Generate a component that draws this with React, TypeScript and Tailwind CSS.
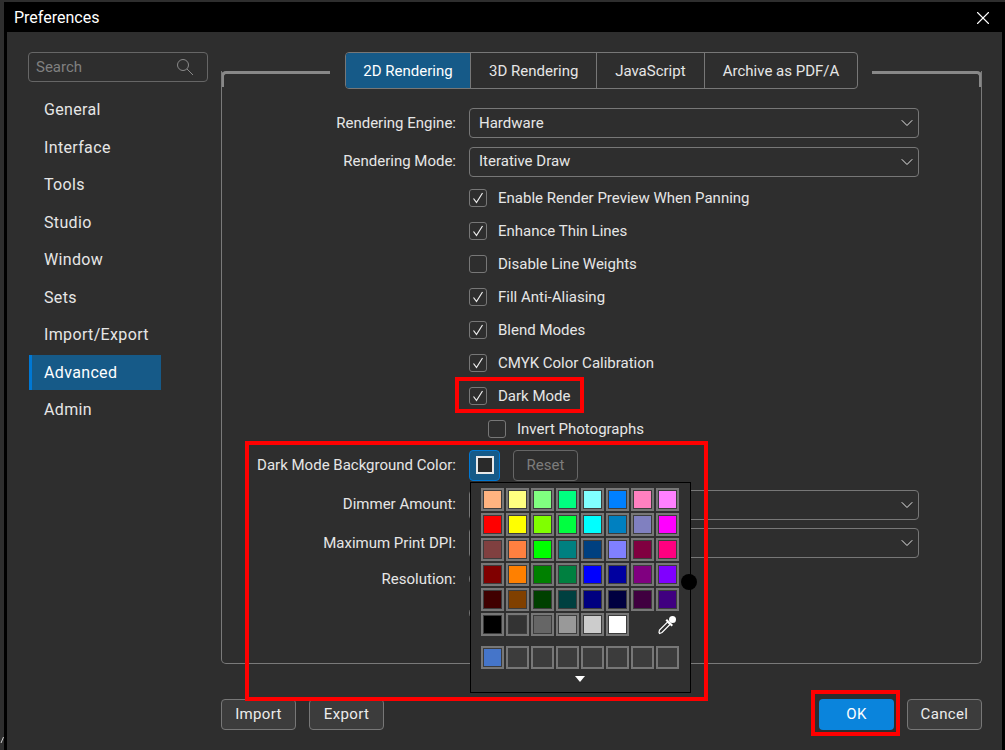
import { ChevronDown, X } from 'lucide-react';

const navItems = ['General', 'Interface', 'Tools', 'Studio', 'Window', 'Sets', 'Import/Export', 'Advanced', 'Admin'];

const tabs = [
  { label: '2D Rendering', width: 'w-[126px]', active: true },
  { label: '3D Rendering', width: 'w-[126px]', active: false },
  { label: 'JavaScript', width: 'w-[108px]', active: false },
  { label: 'Archive as PDF/A', width: 'w-[153px]', active: false },
];

const checks = [
  { label: 'Enable Render Preview When Panning', on: true },
  { label: 'Enhance Thin Lines', on: true },
  { label: 'Disable Line Weights', on: false },
  { label: 'Fill Anti-Aliasing', on: true },
  { label: 'Blend Modes', on: true },
  { label: 'CMYK Color Calibration', on: true },
  { label: 'Dark Mode', on: true },
];

const swatches = [
  'bg-[#ffb380]', 'bg-[#ffff80]', 'bg-[#80ff80]', 'bg-[#00ff80]', 'bg-[#80ffff]', 'bg-[#0080ff]', 'bg-[#ff80c0]', 'bg-[#ff80ff]',
  'bg-[#ff0000]', 'bg-[#ffff00]', 'bg-[#80ff00]', 'bg-[#00ff40]', 'bg-[#00ffff]', 'bg-[#0080c0]', 'bg-[#8080c0]', 'bg-[#ff00ff]',
  'bg-[#804040]', 'bg-[#ff8040]', 'bg-[#00ff00]', 'bg-[#008080]', 'bg-[#004080]', 'bg-[#8080ff]', 'bg-[#800040]', 'bg-[#ff0080]',
  'bg-[#800000]', 'bg-[#ff8000]', 'bg-[#008000]', 'bg-[#008040]', 'bg-[#0000ff]', 'bg-[#0000a0]', 'bg-[#800080]', 'bg-[#8000ff]',
  'bg-[#400000]', 'bg-[#804000]', 'bg-[#004000]', 'bg-[#004040]', 'bg-[#000080]', 'bg-[#000040]', 'bg-[#400040]', 'bg-[#400080]',
  'bg-[#000000]', 'bg-[#333333]', 'bg-[#666666]', 'bg-[#999999]', 'bg-[#cccccc]', 'bg-[#ffffff]',
];

const recent = ['bg-[#4575c9]', 'bg-[#3c3c3c]', 'bg-[#3c3c3c]', 'bg-[#3c3c3c]', 'bg-[#3c3c3c]', 'bg-[#3c3c3c]', 'bg-[#3c3c3c]', 'bg-[#3c3c3c]'];

function Swatch({ color }: { color: string }) {
  return (
    <div className="w-[23px] h-[23px] border-2 border-[#777] bg-[#3c3c3c] p-px">
      <div className={`w-full h-full ${color}`} />
    </div>
  );
}

function CheckBox({ on }: { on: boolean }) {
  return (
    <div className="w-[18px] h-[18px] shrink-0 rounded-[3px] border-[1.5px] border-[#777] flex items-center justify-center">
      {on && (
        <svg width="12" height="12" viewBox="0 0 12 12" fill="none" stroke="#f0f0f0" strokeWidth="1.2">
          <path d="M1.5 6.5 L4.5 10.5 L10.5 1" />
        </svg>
      )}
    </div>
  );
}

function SelectRow({ label, value }: { label: string; value?: string }) {
  return (
    <div className="flex items-center h-[30px] mb-[8.5px]">
      <span className="w-[234px] text-right">{label}</span>
      <div className="ml-[13px] w-[450px] h-full rounded-[4px] border border-[#777] flex items-center justify-between pl-[9px] pr-px">
        <span>{value}</span>
        <ChevronDown className="w-[20px] h-[20px] text-[#e6e6e6]" strokeWidth={1.2} />
      </div>
    </div>
  );
}

function Button({ label }: { label: string }) {
  return (
    <button className="w-[75px] h-[31px] rounded-[4px] border border-[#777] bg-[#3c3c3c] text-[#ececec] tracking-[0.35px] flex items-center justify-center">
      {label}
    </button>
  );
}

export default function App() {
  return (
    <div className="relative w-[1005px] h-[750px] overflow-hidden bg-[#2e2e2e] pt-[2px] pl-[4px] text-[15px] text-[#e6e6e6] font-[Roboto,sans-serif]">
      <div className="w-[1001px] h-[748px] border-x-[3px] border-black bg-[#2e2e2e] flex flex-col">
        <div className="h-[30px] shrink-0 bg-black flex items-center justify-between pt-[2px] pl-[7px] pr-[8px] text-[16px] text-white">
          <span>Preferences</span>
          <X className="w-[22px] h-[22px] text-white" strokeWidth={1.2} />
        </div>

        <div className="flex">
          <aside className="w-[214px] shrink-0 pl-[21px] pt-[20px]">
            <div className="w-[180px] h-[30px] rounded-[4px] border-[1.5px] border-[#666] flex items-center justify-between pl-[7px] pr-[13px] text-[#808080]">
              <span>Search</span>
              <svg width="18" height="18" viewBox="0 0 18 18" fill="none" stroke="#8a8a8a" strokeWidth="1">
                <circle cx="7" cy="7" r="5.5" />
                <path d="M11 11 L17 17" />
              </svg>
            </div>
            <nav className="mt-[10.5px] flex flex-col gap-[2.5px] text-[16px] tracking-[0.35px]">
              {navItems.map((item) => (
                <div
                  key={item}
                  className={
                    item === 'Advanced'
                      ? 'ml-px w-[132px] h-[35px] flex items-center pl-[12px] border-l-[3px] border-[#0078d4] bg-[#165a88] text-white'
                      : 'ml-px w-[132px] h-[35px] flex items-center pl-[15px]'
                  }
                >
                  {item}
                </div>
              ))}
            </nav>
          </aside>

          <main className="w-[761px] shrink-0 pt-[20px]">
            <div className="h-[612px] flex flex-col">
              <div className="flex h-[37px] shrink-0">
                <div className="w-[109px] h-[16px] mt-[18.5px] rounded-tl-[5px] border-t-[3px] border-l-[3px] border-[#888]" />
                <div className="ml-[15px] h-[37px] flex rounded-[4px] border border-[#777] overflow-hidden">
                  {tabs.map((t) => (
                    <div
                      key={t.label}
                      className={`${t.width} pt-[1px] flex items-center justify-center border-r-[1.5px] border-[#777] last:border-r-0 ${t.active ? 'bg-[#165a88] text-white' : ''}`}
                    >
                      {t.label}
                    </div>
                  ))}
                </div>
                <div className="ml-[14px] w-[110px] h-[16px] mt-[18.5px] rounded-tr-[5px] border-t-[3px] border-r-[3px] border-[#888]" />
              </div>

              <div className="flex-1 -mt-[18px] pt-[37px] border-x border-b border-[#7a7a7a] rounded-b-[5px]">
                <SelectRow label="Rendering Engine:" value="Hardware" />
                <SelectRow label="Rendering Mode:" value="Iterative Draw" />

                <div className="flex flex-col pl-[247px] -mt-[3.5px]">
                  {checks.map((c) => (
                    <div key={c.label} className="flex items-center h-[33px] gap-[11px]">
                      <CheckBox on={c.on} />
                      <span>{c.label}</span>
                    </div>
                  ))}
                  <div className="flex items-center h-[33px] gap-[11px] pl-[19px]">
                    <CheckBox on={false} />
                    <span>Invert Photographs</span>
                  </div>
                </div>

                <div className="flex items-center h-[31px] mt-[4px] mb-[9px]">
                  <span className="w-[234px] text-right">Dark Mode Background Color:</span>
                  <div className="ml-[13px] w-[31px] h-[31px] rounded-[4px] border border-[#0078d4] bg-[#165a88] flex items-center justify-center">
                    <div className="w-[18px] h-[18px] border-2 border-[#e8e8e8] bg-[#2a2a2a]" />
                  </div>
                  <div className="ml-[13px] w-[65px] h-[31px] rounded-[4px] border border-[#666] text-[#7c7c7c] flex items-center justify-center">
                    Reset
                  </div>
                </div>

                <SelectRow label="Dimmer Amount:" />
                <SelectRow label="Maximum Print DPI:" />

                <div className="flex items-center h-[20px] mt-[11px]">
                  <span className="w-[234px] text-right">Resolution:</span>
                  <div className="ml-[13px] w-[16px] h-[16px] rounded-full border border-[#777]" />
                </div>
                <div className="flex items-center h-[20px] mt-[14px] pl-[247px]">
                  <div className="w-[16px] h-[16px] rounded-full border border-[#777]" />
                </div>
              </div>
            </div>

            <div className="mt-[35px] flex justify-between">
              <div className="flex gap-[13px]">
                <Button label="Import" />
                <Button label="Export" />
              </div>
              <div className="flex gap-[13px]">
                <button className="w-[75px] h-[31px] rounded-[4px] bg-[#0a84dc] text-white tracking-[0.35px] flex items-center justify-center">OK</button>
                <Button label="Cancel" />
              </div>
            </div>
          </main>
        </div>
      </div>

      {/* colour picker popup */}
      <div className="absolute left-[470px] top-[482px] w-[221px] h-[211px] border border-black bg-[#303030] pl-[10px] pt-[5px]">
        <div className="grid grid-cols-[repeat(8,23px)] gap-x-[2px] gap-y-[2px]">
          {swatches.map((s, i) => (
            <Swatch key={i} color={s} />
          ))}
          <div className="col-span-2 flex items-center justify-center pl-[23px]">
            <svg width="20" height="20" viewBox="0 0 20 20">
              <circle cx="15.5" cy="4.5" r="3.5" fill="#fff" />
              <path d="M10 4 L16 10 L14.5 11.5 L8.5 5.5 Z" fill="#fff" />
              <path d="M10.5 7 L13 9.5 L5 17.5 L2.5 18.5 L2 17.5 L2.5 15 Z" fill="#303030" stroke="#fff" strokeWidth="1.2" />
            </svg>
          </div>
        </div>
        <div className="mt-[10px] flex gap-[2px]">
          {recent.map((s, i) => (
            <Swatch key={i} color={s} />
          ))}
        </div>
        <div className="mt-[7px] ml-[94px] w-0 h-0 border-x-[5.5px] border-t-[6px] border-x-transparent border-t-white" />
        <div className="absolute left-[210px] top-[91px] w-[16px] h-[16px] rounded-full bg-black" />
      </div>

      {/* red annotation boxes */}
      <div className="absolute left-[455px] top-[377px] w-[129px] h-[36px] border-[4px] border-[#ff0000]" />
      <div className="absolute left-[245px] top-[441px] w-[463px] h-[260px] border-[4px] border-[#ff0000]" />
      <div className="absolute left-[811px] top-[690px] w-[89px] h-[46px] border-[4px] border-[#ff0000]" />

      {/* cut-off glyph in the bottom left corner */}
      <svg className="absolute left-0 top-[736px]" width="4" height="8" viewBox="0 0 4 8" fill="none" stroke="#cfcfcf" strokeWidth="1">
        <path d="M3.5 1 L1 7" />
      </svg>
    </div>
  );
}
